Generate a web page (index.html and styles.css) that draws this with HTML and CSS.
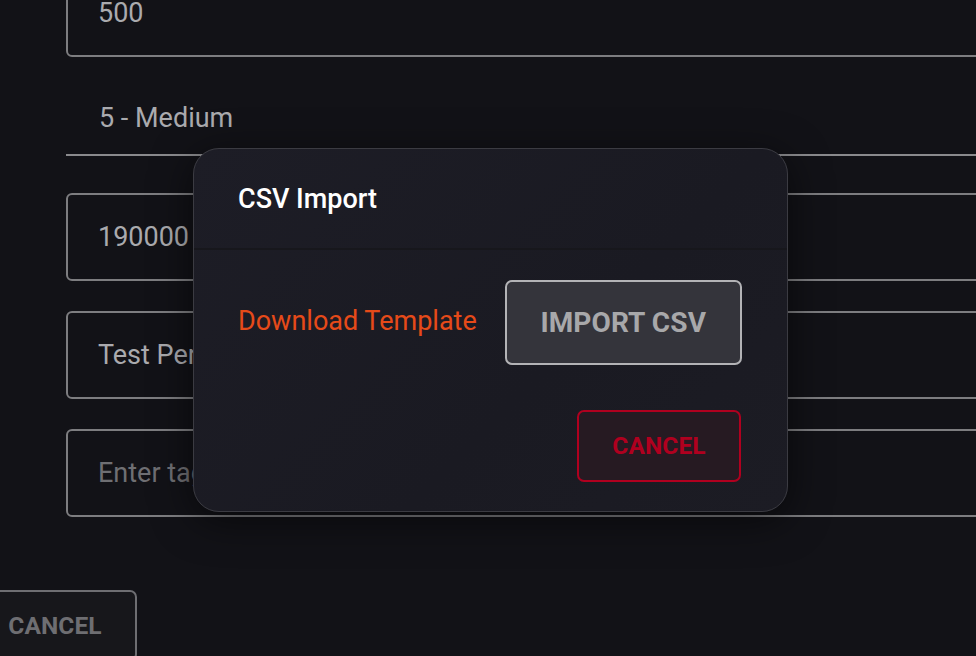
FILE: index.html
```html
<!DOCTYPE html>
<html lang="en">
<head>
<meta charset="utf-8">
<title>CSV Import</title>
<link rel="stylesheet" href="styles.css">
</head>
<body>
<main class="page">
  <form class="form">
    <div class="field outlined"><span class="value">500</span></div>
    <div class="field select"><span class="value">5 - Medium</span></div>
    <div class="field outlined"><span class="value">190000</span></div>
    <div class="field outlined"><span class="value">Test Person</span></div>
    <div class="field outlined"><span class="placeholder">Enter tags</span></div>
  </form>
  <div class="page-actions">
    <button type="button" class="btn btn-page-cancel">Cancel</button>
  </div>
</main>

<div class="dialog" role="dialog" aria-labelledby="dlg-title">
  <div class="dialog-title" id="dlg-title">CSV Import</div>
  <div class="dialog-content">
    <a class="link" href="#">Download Template</a>
    <button type="button" class="btn btn-import">Import CSV</button>
  </div>
  <div class="dialog-actions">
    <button type="button" class="btn btn-cancel">Cancel</button>
  </div>
</div>
</body>
</html>
```
FILE: styles.css
```css
* { box-sizing: border-box; }
html, body { margin: 0; height: 100%; }
body {
  background: #121217;
  font-family: Roboto, "Noto Sans", "Liberation Sans", sans-serif;
  color: #a9a9ad;
  overflow: hidden;
}
.page {
  padding-left: 66px;
}
.form {
  display: flex;
  flex-direction: column;
  margin-top: -31px;
}
.field {
  display: flex;
  align-items: center;
  font-size: 27px;
  color: #aaaaae;
  margin-right: -40px;
  white-space: nowrap;
}
.outlined {
  height: 88px;
  border: 2px solid #7d7d80;
  border-radius: 6px;
  padding-left: 30px;
  margin-bottom: 30px;
}
.outlined:first-child { margin-bottom: 0; }
.select {
  height: 99px;
  border-bottom: 2px solid #8a8a8d;
  padding-left: 33px;
  padding-top: 25px;
  margin-bottom: 37px;
}
.placeholder { color: #6f6f73; }

.page-actions {
  margin-top: 43px;
  margin-left: -93px;
}
.btn {
  font-family: Roboto, "Noto Sans", "Liberation Sans", sans-serif;
  font-weight: 700;
  text-transform: uppercase;
  font-size: 24.5px;
  letter-spacing: 0.1px;
  border-radius: 7px;
  cursor: pointer;
  white-space: nowrap;
  flex-shrink: 0;
}
.btn-page-cancel {
  width: 164px;
  height: 71px;
  padding-bottom: 2px;
  background: #17171b;
  border: 2px solid #6e6e72;
  color: #6e6e72;
}

.dialog {
  position: absolute;
  left: 193px;
  top: 148px;
  width: 595px;
  height: 364px;
  border-radius: 26px;
  background: linear-gradient(135deg, #1d1d26 0%, #1a1a22 60%, #1c1c24 100%);
  border: 1.5px solid #3b3b42;
  box-shadow: 0 8px 40px rgba(0,0,0,0.55);
  display: flex;
  flex-direction: column;
}
.dialog-title {
  height: 101px;
  padding: 34px 0 0 44px;
  font-size: 27px;
  font-weight: 500;
  color: #ffffff;
  border-bottom: 2px solid #17171c;
}
.dialog-content {
  display: flex;
  align-items: center;
  padding: 30px 0 0 44px;
  gap: 28px;
}
.link {
  font-size: 27px;
  color: #e64a19;
  text-decoration: none;
  white-space: nowrap;
  flex-shrink: 0;
  padding-bottom: 3px;
}
.btn-import {
  width: 237px;
  height: 85px;
  background: #34343b;
  border: 2px solid #b3b3b6;
  color: #a8a8aa;
  font-size: 28px;
}
.dialog-actions {
  display: flex;
  justify-content: flex-end;
  padding: 45px 46px 0 0;
}
.btn-cancel {
  width: 164px;
  height: 72px;
  padding-bottom: 2px;
  background: #261a22;
  border: 2px solid #b0001f;
  color: #b0001f;
}
```
